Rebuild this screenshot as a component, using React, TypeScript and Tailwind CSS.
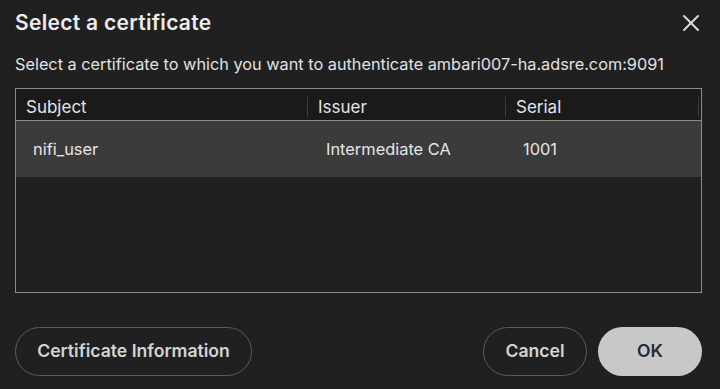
import { X } from "lucide-react";

//Data

const certs = [{ subject: "nifi_user", issuer: "Intermediate CA", serial: "1001" }];

//Component

const App = () => {
  return (
    <div
      className="w-[720px] h-[389px] bg-[#202020] text-[#e6e6e6] px-[15px] flex flex-col overflow-hidden"
      style={{ fontFamily: "Inter, 'Noto Sans', sans-serif" }}
    >
      {/* Title */}
      <div className="flex items-center justify-between h-[44px] pt-[1px]">
        <h1 className="text-[21px] font-semibold tracking-[0.3px] text-[#ececec]">Select a certificate</h1>
        <button className="text-[#d8d8d8]">
          <X size={28} strokeWidth={1.7} />
        </button>
      </div>

      <p className="mt-[10px] text-[16.3px] leading-[20px] text-[#e2e2e2]">
        Select a certificate to which you want to authenticate ambari007-ha.adsre.com:9091
      </p>

      {/* Table */}
      <div className="mt-[14px] w-[687px] h-[205px] border border-[#8c8c8c] flex flex-col">
        <div className="flex h-[32px] bg-[#1a1a1a] border-b border-[#8c8c8c] text-[17px] leading-[20px] text-[#e4e4e4] items-center pt-[4px]">
          <div className="w-[292px] pl-[10px] flex items-center border-r border-[#3e3e3e]">Subject</div>
          <div className="w-[198px] pl-[10px] flex items-center border-r border-[#3e3e3e]">Issuer</div>
          <div className="flex-1 pl-[10px] flex items-center border-r border-[#3e3e3e] mr-[2px]">Serial</div>
        </div>
        {certs.map((c, i) => (
          <div key={i} className="flex h-[56px] bg-[#3b3b3b] items-center text-[16.4px] text-[#e6e6e6]">
            <div className="w-[292px] pl-[17px]">{c.subject}</div>
            <div className="w-[198px] pl-[18px]">{c.issuer}</div>
            <div className="flex-1 pl-[17px]">{c.serial}</div>
          </div>
        ))}
      </div>

      {/* Footer */}
      <div className="mt-[34px] flex items-center w-[687px]">
        <button className="h-[49px] w-[237px] rounded-full border border-[#5c5c5c] text-[17.6px] font-semibold text-[#d4d4d4]">
          Certificate Information
        </button>
        <div className="ml-auto flex gap-[11px]">
          <button className="h-[49px] w-[104px] rounded-full border border-[#5c5c5c] text-[17.6px] font-semibold text-[#d4d4d4]">
            Cancel
          </button>
          <button className="h-[49px] w-[104px] rounded-full bg-[#c8c8c8] text-[17.6px] font-semibold text-[#2a2a2a]">
            OK
          </button>
        </div>
      </div>
    </div>
  );
};

export default App;
